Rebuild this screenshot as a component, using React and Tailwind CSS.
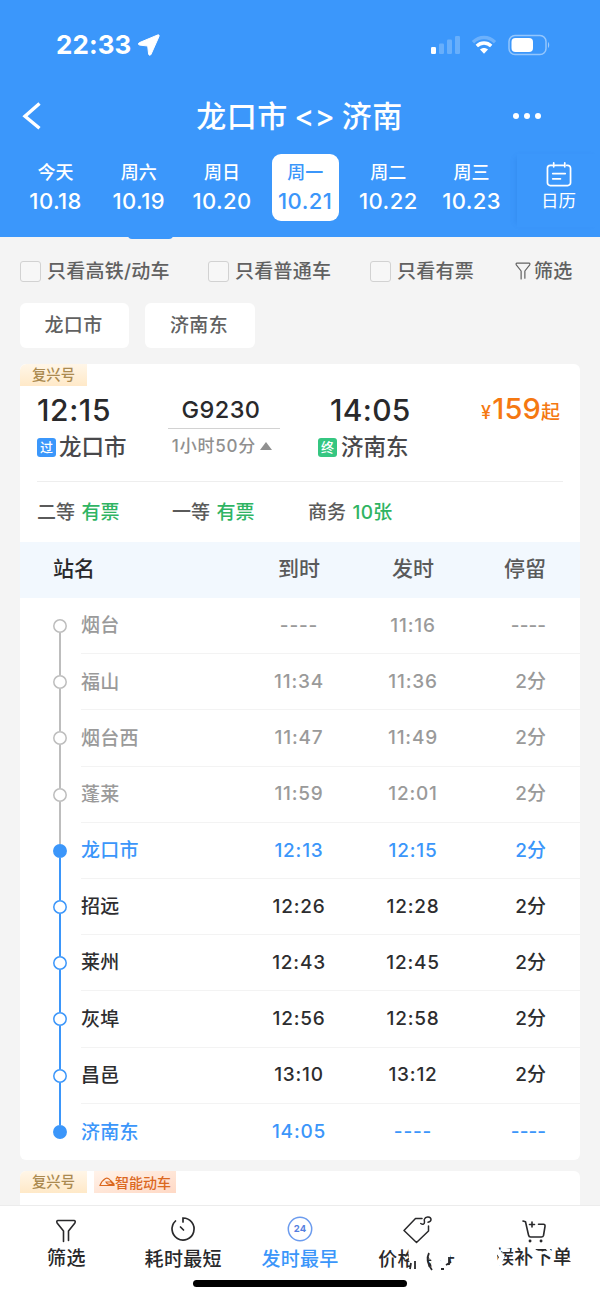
import React from "react";

const days = [
  ["今天", "10.18"],
  ["周六", "10.19"],
  ["周日", "10.20"],
  ["周一", "10.21"],
  ["周二", "10.22"],
  ["周三", "10.23"],
];

const stops = [
  ["烟台", "----", "11:16", "----", "past"],
  ["福山", "11:34", "11:36", "2分", "past"],
  ["烟台西", "11:47", "11:49", "2分", "past"],
  ["蓬莱", "11:59", "12:01", "2分", "past"],
  ["龙口市", "12:13", "12:15", "2分", "end"],
  ["招远", "12:26", "12:28", "2分", "mid"],
  ["莱州", "12:43", "12:45", "2分", "mid"],
  ["灰埠", "12:56", "12:58", "2分", "mid"],
  ["昌邑", "13:10", "13:12", "2分", "mid"],
  ["济南东", "14:05", "----", "----", "end"],
];

const tone = {
  past: "text-[#9a9a9a]",
  end: "text-[#3b96fa]",
  mid: "text-[#2d2d2f]",
};

const dot = {
  past: "fill-white stroke-[#bdbdbd]",
  end: "fill-[#3b96fa] stroke-[#3b96fa]",
  mid: "fill-white stroke-[#3b96fa]",
};

function Funnel({ className }) {
  return (
    <svg viewBox="0 0 20 24" className={className} fill="none" stroke="currentColor" strokeWidth="1.6" strokeLinecap="round" strokeLinejoin="round">
      <path d="M7.500 22.500V12L1.300 4.200C.4 2.800.7 1.500 2 1.500h16c1.300 0 1.600 1.300.7 2.700L12.500 12v9.500" />
    </svg>
  );
}

function StatusBar() {
  return (
    <div className="flex h-[90px] items-center pl-14 pr-[50px]">
      <span className="w-[77px] text-[26px] font-bold leading-none tracking-[0.1px]">22:33</span>
      <svg viewBox="0 0 22 22" className="ml-[5px] h-[22px] w-[22px]" fill="white" stroke="white" strokeWidth="1" strokeLinejoin="round">
        <path d="M19.600 1 1.500 8.600C0 9.300 0 10.800 1.700 11.100l8 .9.900 8c.3 1.500 1.900 1.700 2.500.2L21 2.400C21.500 1.200 20.700.5 19.600 1Z" />
      </svg>
      <svg viewBox="0 0 32 20" className="ml-auto h-5 w-8" fill="white">
        <rect x="1" y="12" width="5" height="7" rx="1.200" />
        <g opacity=".23">
          <rect x="9" y="8.500" width="5" height="10.500" rx="1.200" />
          <rect x="17" y="4.500" width="5" height="14.500" rx="1.200" />
          <rect x="25" y="1" width="5" height="18" rx="1.200" />
        </g>
      </svg>
      <svg viewBox="0 0 26 20" className="ml-[9px] mr-px h-5 w-[26px]" fill="none" stroke="white" strokeWidth="3.400">
        <path d="M2 7.200C8.500 1 17.500 1 24 7.200" opacity=".25" />
        <path d="M5.800 11c4.200-4 10.200-4 14.400 0" />
        <path d="M9 14.600c2.400-2 5.600-2 8 0l-4 4.200Z" fill="white" stroke="none" />
      </svg>
      <svg viewBox="0 0 42 22" className="ml-2.5 h-[22px] w-[42px]" fill="none">
        <rect x="1" y="1.500" width="37" height="19" rx="6" stroke="white" strokeOpacity=".45" strokeWidth="1.500" />
        <rect x="3.500" y="4" width="21.500" height="14" rx="4" fill="white" />
        <path d="M40 8v6c1.600-.8 1.600-5.200 0-6Z" fill="white" fillOpacity=".5" />
      </svg>
    </div>
  );
}

function Header() {
  return (
    <header className="relative h-[237px] bg-[#3b97fb] text-white">
      <StatusBar />
      <div className="grid h-[52px] grid-cols-[1fr_auto_1fr] items-center pl-[22px] pr-[23px]">
        <svg viewBox="0 0 20 28" className="h-7 w-5" fill="none" stroke="white" strokeWidth="3.400">
          <path d="M17.500 1.500 3 14.200l14.500 12" />
        </svg>
        <h1 className="text-[30px] font-medium leading-none tracking-[0.5px] [word-spacing:-2px]">龙口市 &lt;&gt; 济南</h1>
        <div className="flex justify-end gap-[5px] pr-9">
          <i className="size-1.5 rounded-full bg-white" />
          <i className="size-1.5 rounded-full bg-white" />
          <i className="size-1.5 rounded-full bg-white" />
        </div>
      </div>
      <div className="flex pl-[14px] pt-3">
        {days.map(([name, date], i) => (
          <div key={date} className="flex w-[83.2px] justify-center">
            <div className={`flex h-[67px] w-[67px] flex-col items-center rounded-[9px] pt-[9px] ${i === 3 ? "bg-white text-[#3b96fa]" : ""}`}>
              <span className="text-[18px] font-medium leading-5">{name}</span>
              <span className="mt-[5px] text-[22px] font-medium leading-[26px] tracking-[0.4px]">{date}</span>
            </div>
          </div>
        ))}
        <div className="ml-1 flex h-[73px] flex-1 flex-col items-center pt-2 shadow-[-4px_0_6px_-4px_rgba(20,90,190,0.25)]">
          <svg viewBox="0 0 26 26" className="h-[25px] w-[26px]" fill="none" stroke="white" strokeWidth="1.800" strokeLinecap="round">
            <path d="M4 3.500h2M9 3.500h8.500M21 3.500h1a3 3 0 0 1 3 3v15a3 3 0 0 1-3 3H4a3 3 0 0 1-3-3v-15a3 3 0 0 1 3-3M7.500 1v4M19 1v4M6.500 12h13M6.500 17.500h8" />
          </svg>
          <span className="mt-[2px] text-[17.5px] leading-6">日历</span>
        </div>
      </div>
      <span className="absolute left-32 top-[235px] h-1 w-[45px] rounded-b bg-[#3b97fb]" />
    </header>
  );
}

function Check({ label, className }) {
  return (
    <label className={`flex items-center ${className}`}>
      <span className="size-[21px] rounded-[3px] border border-[#d2d2d2] bg-[#f7f7f7]" />
      <span className="ml-1.5 whitespace-nowrap pt-0.5">{label}</span>
    </label>
  );
}

function Filters() {
  return (
    <div className="px-5 pt-[21px] text-[19px] font-medium tracking-[0.25px] text-[#616161]">
      <div className="flex h-[26px] items-center">
        <Check label="只看高铁/动车" className="w-[188px]" />
        <Check label="只看普通车" className="w-[162px]" />
        <Check label="只看有票" className="w-[145px]" />
        <Funnel className="h-[18px] w-4" />
        <span className="ml-[3px] whitespace-nowrap pt-0.5">筛选</span>
      </div>
      <div className="mt-[19px] flex gap-4">
        <button className="h-[45px] w-[109px] rounded-md bg-white pr-0.5 pt-0.5 tracking-[0.4px]">龙口市</button>
        <button className="h-[45px] w-[110px] rounded-md bg-white pr-0.5 pt-0.5 tracking-[0.4px]">济南东</button>
      </div>
    </div>
  );
}

function FuxingTag() {
  return (
    <div className="h-[22px] w-[67px] rounded-tl-md bg-linear-to-b from-[#fff6e8] to-[#ffe9c8] text-center text-[14.3px] font-medium leading-[22px] text-[#ab8a50]">复兴号</div>
  );
}

function Summary() {
  return (
    <>
      <div className="flex h-[95px] pl-[17px] pr-5">
        <div className="w-[131px] pt-[9px]">
          <div className="text-[30px] font-medium leading-[30px] tracking-[0.6px] text-[#29292b]">12:15</div>
          <div className="mt-[7px] flex items-center text-[22.5px] font-medium leading-[30px] text-[#48484b]">
            <span className="mr-[3px] size-[19px] rounded-[3px] bg-[#3b97fb] text-center text-[13px] leading-[19px] text-white">过</span>龙口市
          </div>
        </div>
        <div className="w-28 pt-2.5 text-center">
          <div className="pb-[5px] pr-1.5 text-[23.5px] font-medium leading-[27px] tracking-[0.4px] text-[#29292b]">G9230</div>
          <div className="flex items-center justify-center gap-1 border-t border-[#d2d2d2] pr-1 pt-1.5 text-[17px] leading-[22px] text-[#909090]">
            <span className="whitespace-nowrap font-medium tracking-[0.8px]">1小时50分</span>
            <svg viewBox="0 0 12 8" className="h-2 w-3" fill="currentColor"><path d="M6 0l6 8H0z" /></svg>
          </div>
        </div>
        <div className="ml-[38px] pt-[9px]">
          <div className="pl-3 text-[30px] font-medium leading-[30px] tracking-[0.3px] text-[#29292b]">14:05</div>
          <div className="mt-[7px] flex items-center text-[22.5px] font-medium leading-[30px] text-[#48484b]">
            <span className="mr-1 size-[19px] rounded-[3px] bg-[#35c681] text-center text-[13px] leading-[19px] text-white">终</span>济南东
          </div>
        </div>
        <div className="ml-auto flex items-baseline pt-[7px] text-[#f57811]">
          <span className="mr-px text-[18px] font-medium leading-[32px]">¥</span>
          <span className="text-[29px] font-medium leading-[32px] tracking-[0.2px]">159</span>
          <span className="text-[19px] font-medium leading-[32px]">起</span>
        </div>
      </div>
      <div className="mx-[17px] flex h-[61px] items-center border-t border-[#eeeeee] text-[19px] font-medium text-[#5a5a5a] [word-spacing:1.5px]">
        <span className="w-[135px] pt-0.5">二等 <b className="font-medium text-[#2fb463]">有票</b></span>
        <span className="w-[136px] pt-0.5">一等 <b className="font-medium text-[#2fb463]">有票</b></span>
        <span className="pt-0.5">商务 <b className="font-medium tracking-[0.3px] text-[#2fb463]">10张</b></span>
      </div>
    </>
  );
}

function Stop({ stop, index }) {
  const [name, arrive, depart, stay, kind] = stop;
  const last = index === stops.length - 1;
  return (
    <div className={`flex h-[56.2px] ${tone[kind]}`}>
      <div className="flex w-[61px] flex-col items-center pl-[19px]">
        <span className={`h-[21px] w-[1.5px] ${index === 0 ? "bg-transparent" : index < 5 ? "bg-[#bdbdbd]" : "bg-[#3b96fa]"}`} />
        <svg viewBox="0 0 14 14" className="size-3.5 shrink-0"><circle cx="7" cy="7" r="6.200" strokeWidth="1.500" className={dot[kind]} /></svg>
        <span className={`w-[1.5px] flex-1 ${last ? "bg-transparent" : index < 4 ? "bg-[#bdbdbd]" : "bg-[#3b96fa]"}`} />
      </div>
      <div className={`flex flex-1 items-center text-[19px] font-medium ${last ? "" : "border-b border-[#f3f3f3]"}`}>
        <span className="w-[161px] pt-0.5 tracking-[0.3px]">{name}</span>
        <span className="w-[114px] pt-px text-center tracking-[0.8px]">{arrive}</span>
        <span className="w-[114px] pt-px text-center tracking-[0.8px]">{depart}</span>
        <span className="flex-1 pr-[34px] pt-px text-right">{stay}</span>
      </div>
    </div>
  );
}

function BottomBar() {
  const svg = "h-[28px] w-[30px]";
  return (
    <nav className="absolute inset-x-0 bottom-0 h-[95px] border-t border-[#ececec] bg-white text-[19px] font-medium tracking-[0.3px] text-[#29292b]">
      <div className="flex px-2 pt-2.5">
        <div className="flex w-[117px] flex-col items-center"><Funnel className="mt-[3px] h-6 w-5" /><span className="mt-[3px] leading-[26px]">筛选</span></div>
        <div className="flex w-[117px] flex-col items-center">
          <svg viewBox="0 0 30 28" className={svg} fill="none" stroke="currentColor" strokeWidth="1.700" strokeLinecap="round"><path d="M15 6V2a11 11 0 1 1-7.500 3M12.500 11l3 3" /></svg>
          <span className="mt-[3px] leading-[26px]">耗时最短</span>
        </div>
        <div className="flex w-[117px] flex-col items-center text-[#3b96fa]">
          <svg viewBox="0 0 26 26" className="size-[26px]">
            <circle cx="13" cy="13" r="11.700" fill="none" stroke="#6b9bee" strokeWidth="1.500" />
            <text x="13" y="16.400" textAnchor="middle" fontSize="9.500" fontWeight="700" letterSpacing="0" fill="#557fe0">24</text>
          </svg>
          <span className="mt-[5px] leading-[26px]">发时最早</span>
        </div>
        <div className="relative flex w-[117px] flex-col items-center">
          <svg viewBox="0 0 30 28" className={svg} fill="none" stroke="currentColor" strokeWidth="1.500" strokeLinecap="round" strokeLinejoin="round"><path d="M20 2.500h-6.500L2 14.500 14.500 26.500 26.500 15V10M18.800 7.500c2.200 1.500 3.700.5 3.700-1.500 0-1-.5-2 0-3 1-3 6.500-2.500 6.500.5 0 2-1.500 2.500-3 2.700" /></svg>
          <span className="mt-[3px] leading-[26px]">价格最低</span>
          <svg viewBox="0 0 84 28" className="absolute left-[17px] top-[29px] h-7 w-[84px]" fill="white">
            <path d="M33 0h51v10l-5 2-3-3-2 6-7-1-5 5-8-6-2-5-3 3v15H33l3-4-2-7Z" />
            <path d="M37 14h2l-1 11h-3ZM41 6h13l-2 10 3 10H42ZM57 8l8 5 4 14H58l-2-8ZM66 13l7 2 1 7-7 5ZM75 18l9-4v14H70Z" />
          </svg>
          <svg viewBox="0 0 84 28" className="absolute left-[17px] top-[29px] h-7 w-[84px]" fill="none" stroke="currentColor" strokeWidth="1.800">
            <path d="M36 18l-1 6M40 16v8M54 8c-3 6-1 12 3 17M66 24h3M71 20l5-3M74 12v8" />
          </svg>
        </div>
        <div className="relative flex w-[117px] flex-col items-center">
          <svg viewBox="0 0 30 28" className={svg} fill="none" stroke="currentColor" strokeWidth="1.600" strokeLinecap="round" strokeLinejoin="round"><path d="M4 5l2.500.8L9.500 19c.3 1.500 1 2 2 2h11c1 0 1.700-.5 2-1.500l1.500-9c.2-1.500-.4-2.200-1.500-2.200h-5M10.500 8.500h5M13 6v5" /><path d="M11 25h.1M22 25h.1" strokeWidth="2.800" /></svg>
          <span className="mt-px leading-[26px]">候补下单</span>
          <svg viewBox="0 0 84 28" className="absolute left-[17px] top-[29px] h-7 w-[84px]" fill="none" stroke="white">
            <path d="M4 4l6 8-6 10" strokeWidth="5" />
            <path d="M2 1v26" strokeWidth="6" />
            <path d="M10 4l8 1M41 4c3 4 8 5 12 3M55 3l4 5" strokeWidth="3" />
            <path d="M76 13l7 6M79 5v5" strokeWidth="2" />
          </svg>
        </div>
      </div>
      <span className="absolute bottom-[13px] left-[193px] h-[7px] w-[214px] rounded-full bg-black" />
    </nav>
  );
}

export default function App() {
  return (
    <main className="relative h-[1300px] w-[600px] overflow-hidden bg-[#f4f4f4] font-['Inter','Noto_Sans_CJK_SC',sans-serif]">
      <Header />
      <Filters />
      <section className="mx-5 mt-4 h-[796px] overflow-hidden rounded-md bg-white">
        <FuxingTag />
        <Summary />
        <div className="flex h-[56px] items-center bg-[#f2f8fe] pb-0.5 pl-[33px] text-[21px] font-medium text-[#5a5a5a]">
          <span className="w-[189px] text-[#29292b]">站名</span>
          <span className="w-[114px] text-center">到时</span>
          <span className="w-[114px] text-center">发时</span>
          <span className="flex-1 pr-[34px] text-right">停留</span>
        </div>
        {stops.map((stop, i) => <Stop key={stop[0]} stop={stop} index={i} />)}
      </section>
      <section className="mx-5 mt-[11px] flex h-20 gap-[7px] rounded-md bg-white">
        <FuxingTag />
        <div className="flex h-[22px] w-[82px] items-center justify-center bg-linear-to-br from-[#fff3ea] to-[#ffd9c5] text-[14px] font-medium text-[#db681f]">
          <svg viewBox="0 0 16 10" className="h-2.5 w-4 shrink-0" fill="none" stroke="currentColor" strokeWidth="1.200"><path d="M1 8.500C2 5 4 3 6.500 1.500 8 .8 10 1.500 11.500 3.500L15 7v1.500H1ZM7 5h5l2 2.500c-3 .3-6 0-7-2.500Z" /></svg>
          智能动车
        </div>
      </section>
      <BottomBar />
    </main>
  );
}
